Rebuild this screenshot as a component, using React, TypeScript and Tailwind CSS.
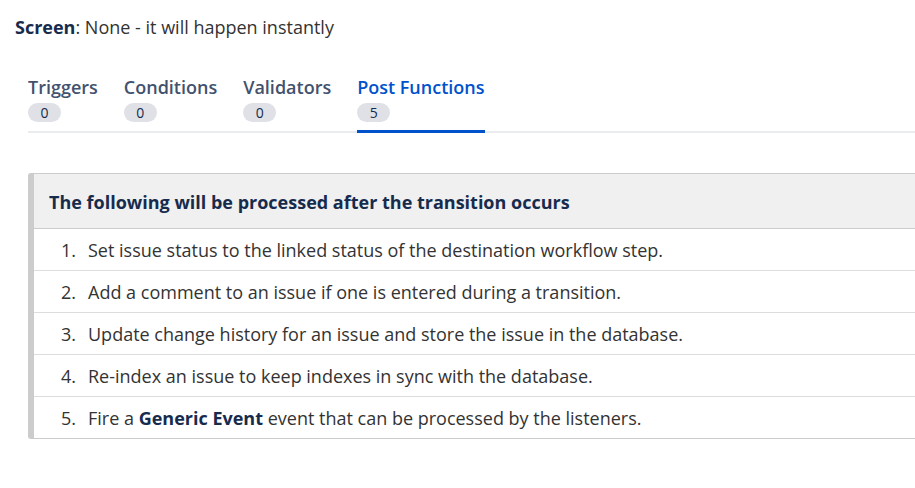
import React from "react";

const tabs = [
  { id: "triggers", label: "Triggers", count: 0 },
  { id: "conditions", label: "Conditions", count: 0 },
  { id: "validators", label: "Validators", count: 0 },
  { id: "post-functions", label: "Post Functions", count: 5 },
];

const App: React.FC = () => {
  const active = "post-functions";

  return (
    <div
      className="w-[915px] h-[488px] overflow-hidden bg-white text-[#333333]"
      style={{ fontFamily: '"Open Sans", "Noto Sans", sans-serif' }}
    >
      <div className="pt-[15px] pl-[15px]">
        {/* Screen info */}
        <p className="text-[18px] leading-[24px]">
          <span className="font-bold text-[#172b4d]">Screen</span>: None - it will happen instantly
        </p>

        {/* Tabs */}
        <div className="ml-[13px] mt-[36px] flex border-b-2 border-[#ebecf0]">
          {tabs.map((tab) => {
            const isActive = tab.id === active;
            return (
              <div
                key={tab.id}
                className={`mr-[26px] flex flex-col items-start -mb-[2px] pb-[8px] border-b-[3px] ${
                  isActive ? "border-[#0052cc]" : "border-transparent"
                }`}
              >
                <span
                  className={`text-[18px] leading-[24px] font-semibold ${
                    isActive ? "text-[#0052cc]" : "text-[#42526e]"
                  }`}
                >
                  {tab.label}
                </span>
                <span className="mt-[4px] h-[19px] w-[33px] rounded-full bg-[#dfe1e6] text-[#172b4d] text-[14px] leading-[19px] text-center">
                  {tab.count}
                </span>
              </div>
            );
          })}
        </div>

        {/* Post functions panel */}
        <div className="ml-[13px] mt-[40px] w-[1000px] rounded-[3px] border border-[#cccccc] border-l-[6px]">
          <div className="h-[55px] bg-[#f0f0f0] pl-[15px] pt-[2px] flex items-center border-b border-[#cccccc]">
            <h3 className="text-[18px] font-bold text-[#172b4d]">
              The following will be processed after the transition occurs
            </h3>
          </div>
          <ol className="text-[18px]">
            <li className="h-[42px] flex items-center border-b border-[#dddddd] pl-[27px] pt-[1px]">
              <span className="w-[27px]">1.</span>
              Set issue status to the linked status of the destination workflow step.
            </li>
            <li className="h-[42px] flex items-center border-b border-[#dddddd] pl-[27px] pt-[1px]">
              <span className="w-[27px]">2.</span>
              Add a comment to an issue if one is entered during a transition.
            </li>
            <li className="h-[42px] flex items-center border-b border-[#dddddd] pl-[27px] pt-[1px]">
              <span className="w-[27px]">3.</span>
              Update change history for an issue and store the issue in the database.
            </li>
            <li className="h-[42px] flex items-center border-b border-[#dddddd] pl-[27px] pt-[1px]">
              <span className="w-[27px]">4.</span>
              Re-index an issue to keep indexes in sync with the database.
            </li>
            <li className="h-[41px] flex items-center pl-[27px] pt-[1px]">
              <span className="w-[27px]">5.</span>
              <span>
                Fire a <strong className="font-bold text-[#172b4d]">Generic Event</strong> event that can be
                processed by the listeners.
              </span>
            </li>
          </ol>
        </div>
      </div>
    </div>
  );
};

export default App;
